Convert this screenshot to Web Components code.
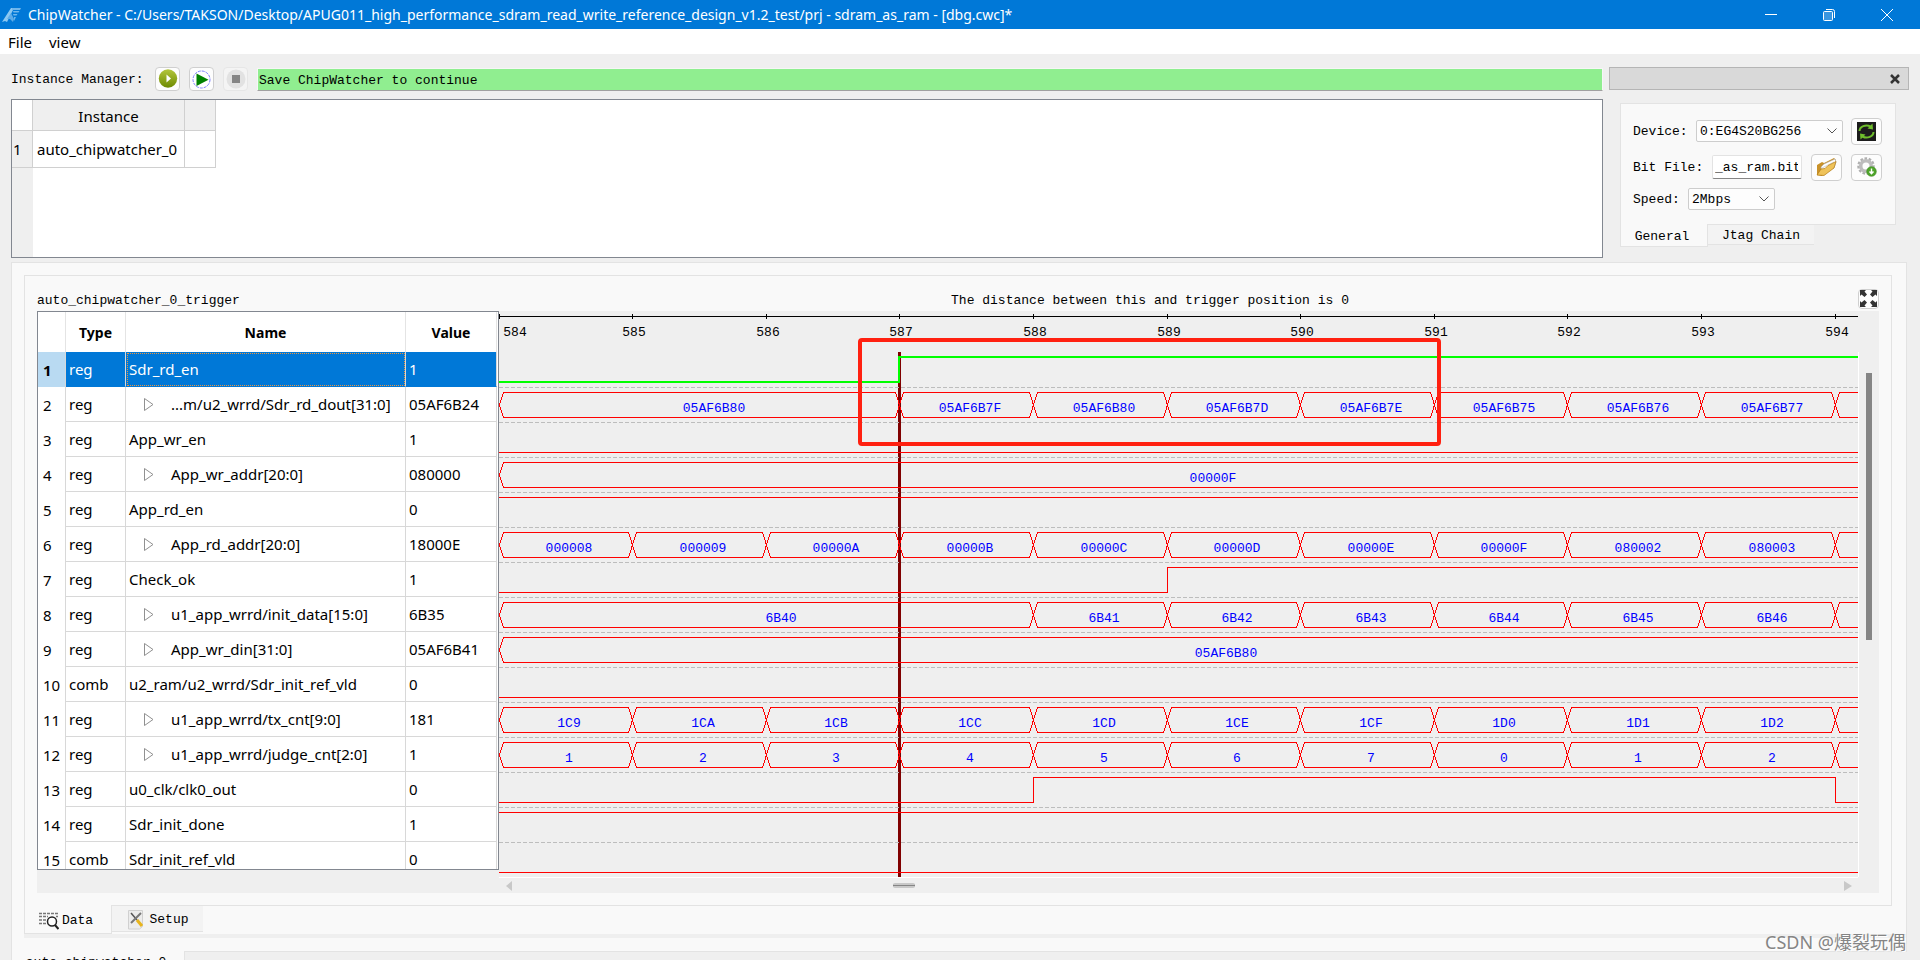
<!DOCTYPE html>
<html lang="en">
<head>
<meta charset="utf-8">
<title>ChipWatcher</title>
<style>
html, body { margin: 0; height: 100%; overflow: hidden; background: #efefef; }
body {
  --ui: "Noto Sans", "Open Sans", "Noto Sans CJK SC", sans-serif;
  --mono: "Liberation Mono", "Noto Sans CJK SC", monospace;
  --panel: #f9f9f9;
  --edge: #e3e3e3;
  --blue: #0078d7;
  color: #000;
  font: 13px/16px var(--mono);
}
</style>
</head>
<body>
<cw-app></cw-app>
<script>
const define = (name, html, setup) => {
  const template = document.createElement('template');
  template.innerHTML = html;
  customElements.define(name, class extends HTMLElement {
    constructor() {
      super();
      this.attachShadow({ mode: 'open' }).append(template.content.cloneNode(true));
    }
    connectedCallback() {
      if (setup && !this.ready) { this.ready = true; setup(this, this.shadowRoot); }
    }
  });
};

/* ---------- data ---------- */
const ORIGIN = 584, STEP = 133.6, ROW = 35, FIRST = 41;
const bus = (...cells) => cells;   // cell: [first sample, text, optional label x]
const each = (...texts) => texts.map((t, i) => [i, t]);
const SIGNALS = [
  { type: 'reg', name: 'Sdr_rd_en', value: '1', bit: [0, 3], selected: true },
  { type: 'reg', name: '...m/u2_wrrd/Sdr_rd_dout[31:0]', value: '05AF6B24',
    bus: bus([0, '05AF6B80', 215], [3, '05AF6B7F'], [4, '05AF6B80'], [5, '05AF6B7D'], [6, '05AF6B7E'], [7, '05AF6B75'], [8, '05AF6B76'], [9, '05AF6B77'], [10, '']) },
  { type: 'reg', name: 'App_wr_en', value: '1', bit: [0] },
  { type: 'reg', name: 'App_wr_addr[20:0]', value: '080000', bus: bus([0, '00000F', 714]) },
  { type: 'reg', name: 'App_rd_en', value: '0', bit: [1] },
  { type: 'reg', name: 'App_rd_addr[20:0]', value: '18000E',
    bus: each('000008', '000009', '00000A', '00000B', '00000C', '00000D', '00000E', '00000F', '080002', '080003', '') },
  { type: 'reg', name: 'Check_ok', value: '1', bit: [0, 5] },
  { type: 'reg', name: 'u1_app_wrrd/init_data[15:0]', value: '6B35',
    bus: bus([0, '6B40', 282], [4, '6B41'], [5, '6B42'], [6, '6B43'], [7, '6B44'], [8, '6B45'], [9, '6B46'], [10, '']) },
  { type: 'reg', name: 'App_wr_din[31:0]', value: '05AF6B41', bus: bus([0, '05AF6B80', 727]) },
  { type: 'comb', name: 'u2_ram/u2_wrrd/Sdr_init_ref_vld', value: '0', bit: [0] },
  { type: 'reg', name: 'u1_app_wrrd/tx_cnt[9:0]', value: '181',
    bus: each('1C9', '1CA', '1CB', '1CC', '1CD', '1CE', '1CF', '1D0', '1D1', '1D2', '') },
  { type: 'reg', name: 'u1_app_wrrd/judge_cnt[2:0]', value: '1',
    bus: each('1', '2', '3', '4', '5', '6', '7', '0', '1', '2', '') },
  { type: 'reg', name: 'u0_clk/clk0_out', value: '0', bit: [0, 4, 10] },
  { type: 'reg', name: 'Sdr_init_done', value: '1', bit: [1] },
  { type: 'comb', name: 'Sdr_init_ref_vld', value: '0', bit: [0] }
];

/* ---------- title bar ---------- */
define('cw-titlebar', `
<style>
:host { display: flex; align-items: center; height: 29px; padding-right: 4px; background: var(--blue); color: #fff; font: 14px/20px var(--ui); }
.logo { margin: 0 7px 0 2px; }
h1 { flex: 1; margin: 0; font: inherit; white-space: nowrap; overflow: hidden; }
button { width: 58px; height: 29px; padding: 0; border: 0; background: none; color: #fff; display: grid; place-items: center; }
svg { display: block; fill: none; stroke: currentColor; }
</style>
<svg class="logo" width="19" height="16" viewBox="0 0 19 16">
  <g stroke="none"><path d="M0 15 9 1h3L7 11l-2 4-2-1z" fill="#8cc8f2"/><path d="M5 12 9 6l3 6-1 3-3-3z" fill="#5cabe8"/>
  <path d="M10 1h9l-1 2h-8zM11 4h6.500l-1 1.500h-5zM11 7h4.500l-1 1.500h-3zM12 10h2l-2 4z" fill="#6fb6ec"/></g>
</svg>
<h1>ChipWatcher - C:/Users/TAKSON/Desktop/APUG011_high_performance_sdram_read_write_reference_design_v1.2_test/prj - sdram_as_ram - [dbg.cwc]*</h1>
<button aria-label="Minimize"><svg width="14" height="14"><path d="M1 6.500h12"/></svg></button>
<button aria-label="Restore"><svg width="14" height="14"><rect x="1.500" y="3.500" width="9" height="9" rx="1" fill="#3a96e0"/><path d="M4 1.500h6.500a2 2 0 0 1 2 2V10"/></svg></button>
<button aria-label="Close"><svg width="14" height="14"><path d="m1 1 12 12M13 1 1 13"/></svg></button>
`);

define('cw-menubar', `
<style>
:host { display: flex; gap: 17px; padding-left: 8px; height: 25px; background: #fff; }
button { padding: 0; border: 0; background: none; color: inherit; font: 15px/26px var(--ui); }
</style>
<button>File</button><button>view</button>
`);

/* ---------- small framed icon button ---------- */
define('cw-tool', `
<style>
:host { display: block; flex: none; width: var(--w, 25px); height: var(--h, 24px); }
button { display: grid; place-items: center; box-sizing: border-box; width: 100%; height: 100%; padding: 0;
  border: 1px solid #cfcfcf; border-radius: 4px; background: #fdfdfd; }
:host([off]) button { border-color: #e6e6e6; background: #f4f4f4; }
::slotted(svg) { display: block; }
</style>
<button><slot></slot></button>
`, (el, root) => {
  const b = root.querySelector('button');
  b.setAttribute('aria-label', el.getAttribute('label'));
  b.disabled = el.hasAttribute('off');
});

/* ---------- instance manager ---------- */
define('cw-instances', `
<style>
:host { display: block; flex: 1; min-width: 0; }
.bar { display: flex; align-items: center; height: 24px; line-height: 20px; }
.bar span { width: 144px; padding-top: 2px; white-space: nowrap; }
cw-tool { margin-right: 9px; }
output { flex: 1; box-sizing: border-box; height: 23px; padding-left: 1px; font: inherit; line-height: 24px;
  background: #90ee90; border: 1px solid #f6f6f6; border-bottom-color: #a0a0a0; }
.box { box-sizing: border-box; height: 159px; margin-top: 8px; border: 1px solid #828790;
  background: linear-gradient(90deg, #efefef 21px, #fff 21px); }
table { border-collapse: separate; border-spacing: 0; table-layout: fixed; width: 204px; background: #fff; font: 15px/20px var(--ui); }
th, td { box-sizing: border-box; padding: 0; border: solid #d0d0d0; border-width: 0 1px 1px 0; font-weight: 400; white-space: nowrap; }
thead tr { height: 31px; } tbody tr { height: 37px; }
thead th { background: #efefef; padding-top: 2px; }
thead td { border-color: #fff #d0d0d0 #d0d0d0 #fff; }
tbody th { background: #efefef; text-align: left; padding-left: 1px; }
tbody td { text-align: left; padding-left: 4px; }
</style>
<div class="bar"><span>Instance Manager:</span>
  <cw-tool label="Run once"><svg width="20" height="20" viewBox="0 0 20 20"><defs><linearGradient id="g" x2="0" y2="1"><stop stop-color="#b3c63c"/><stop offset="1" stop-color="#6d8a00"/></linearGradient></defs><circle cx="10" cy="9.500" r="9.200" fill="url(#g)"/><path d="M8.500 5.500v8l4.500-4z" fill="#fff"/></svg></cw-tool>
  <cw-tool label="Run"><svg width="19" height="19" viewBox="0 0 19 19"><circle cx="9.500" cy="9.500" r="8.500" fill="#fff" stroke="#8080ff" stroke-dasharray="3 1"/><path d="M4.500 3.500v12.500l12-6.200z" fill="#008000"/></svg></cw-tool>
  <cw-tool label="Stop" off><svg width="20" height="20" viewBox="0 0 20 20"><circle cx="10" cy="10" r="9.500" fill="#e2e2e2"/><rect x="6" y="6" width="8" height="8" fill="#858585"/></svg></cw-tool>
  <output>Save ChipWatcher to continue</output>
</div>
<div class="box"><table>
  <colgroup><col style="width:21px"><col style="width:152px"><col style="width:31px"></colgroup>
  <thead><tr><td></td><th scope="col">Instance</th><th></th></tr></thead>
  <tbody><tr><th scope="row">1</th><td>auto_chipwatcher_0</td><td></td></tr></tbody>
</table></div>
`);

/* ---------- drop-down ---------- */
define('cw-select', `
<style>
:host { display: grid; align-items: center; height: 22px; box-sizing: border-box; border: 1px solid #cdcdcd; border-radius: 2px; background: #fdfdfd; }
select, svg { grid-area: 1 / 1; }
select { appearance: none; width: 100%; height: 20px; padding: 2px 0 0 3px; border: 0; background: none; color: inherit; font: inherit; }
svg { justify-self: end; margin-right: 5px; fill: none; stroke: #555; pointer-events: none; }
</style>
<select><option></option></select><svg width="10" height="6"><path d="M.5.5 5 5 9.500.5"/></svg>
`, (el, root) => {
  root.querySelector('option').textContent = el.getAttribute('value');
  root.querySelector('select').setAttribute('aria-label', el.getAttribute('label'));
});

/* ---------- tab strip with the tabs under their page ---------- */
define('cw-tabs', `
<style>
:host { display: flex; align-items: flex-start; margin-top: -1px; }
</style>
<slot></slot>
`, el => el.setAttribute('role', 'tablist'));

define('cw-tab', `
<style>
:host { display: block; box-sizing: border-box; height: calc(var(--tab-h) - 2px); background: #f3f3f3; border: 1px solid var(--edge); border-width: 1px 0 1px 0; }
:host([current]) { height: var(--tab-h); background: var(--panel); border-width: 0 1px 1px 1px; }
button { display: flex; align-items: center; justify-content: center; box-sizing: border-box; width: 100%; height: 100%; padding: 3px 0 0; border: 0; background: none; font: inherit; color: inherit; white-space: nowrap; }
:host([current]) button { padding: 4px 4px 0 0; }
</style>
<button role="tab"><slot></slot></button>
`);

/* ---------- configuration dock ---------- */
define('cw-dock', `
<style>
:host { display: block; flex: none; width: 300px; }
header { box-sizing: border-box; height: 23px; border: 1px solid #b5b5b5; background: #d9d9d9; display: flex; justify-content: flex-end; }
header button { width: 26px; padding: 0; border: 0; background: none; display: grid; place-items: center; }
.page { box-sizing: border-box; width: 276px; height: 122px; margin: 13px 0 0 11px; padding: 13px 13px 0 12px; background: var(--panel); border: 1px solid var(--edge); }
.row { display: flex; align-items: center; height: 28px; margin-bottom: 8px; }
.row:nth-child(2) { margin-bottom: 4px; }
.row label { padding-top: 2px; white-space: nowrap; }
cw-select { flex: none; }
cw-tool { --w: 31px; --h: 27px; margin-left: 9px; }
input { box-sizing: border-box; width: 90px; height: 24px; margin-left: auto; padding: 0 3px 0 2px; border: 1px solid var(--edge); border-bottom-color: #858585; border-radius: 2px; background: #fff; font: inherit; color: inherit; text-align: right; }
cw-tabs { margin-left: 11px; --tab-h: 23px; }
</style>
<header><button aria-label="Close dock"><svg width="10" height="10" stroke="#333" stroke-width="2.500"><path d="m1 1 8 8M9 1 1 9"/></svg></button></header>
<div class="page">
  <div class="row"><label style="width:64px">Device:</label><cw-select label="Device" value="0:EG4S20BG256" style="width:147px"></cw-select>
    <cw-tool label="Refresh" style="margin-left:8px"><svg width="19" height="19" viewBox="0 0 19 19"><rect width="19" height="19" fill="#1c1c1c"/><path d="M2.500 9a7 5.500 0 0 1 11-4.500M16.500 10a7 5.500 0 0 1-11 4.500" fill="none" stroke="#6fbe2c" stroke-width="2"/><path d="m15.500 1.500.5 6-5.500-1zM3.500 17.500l-.5-6 5.500 1z" fill="#6fbe2c"/></svg></cw-tool></div>
  <div class="row"><label for="bit">Bit File:</label><input id="bit" value="_as_ram.bit">
    <cw-tool label="Open"><svg width="22" height="20" viewBox="0 0 22 20"><path d="M1 8 6 5l2 1 10-5 2 2-1 2L6 19l-5-1z" fill="#c9922a"/><path d="M5 10 8 7l11-5 1 3-2 6-12 5z" fill="#fff" stroke="#aaa" stroke-width=".6"/><path d="m6 11 12-6" stroke="#bbb" stroke-width=".6"/><path d="M1 18 5 12l4-.5 3-3 8-4-2 6.500L8 18.500z" fill="#efc35a" stroke="#b27a12" stroke-width=".7"/></svg></cw-tool>
    <cw-tool label="Download"><svg width="20" height="20" viewBox="0 0 20 20"><circle cx="9" cy="9" r="7.500" fill="none" stroke="#b0b0b0" stroke-width="2.500" stroke-dasharray="2.600 1.600"/><circle cx="9" cy="9" r="5.300" fill="none" stroke="#bdbdbd" stroke-width="3.500"/><circle cx="14.500" cy="14.500" r="4.800" fill="#4fa52b" stroke="#3a8a1c" stroke-width=".6"/><path d="M14.500 11.500v5m-2-2 2 2.200 2-2.200" fill="none" stroke="#fff" stroke-width="1.400"/></svg></cw-tool></div>
  <div class="row"><label style="width:55px">Speed:</label><cw-select label="Speed" value="2Mbps" style="width:87px"></cw-select></div>
</div>
<cw-tabs><cw-tab current style="width:88px">General</cw-tab><cw-tab style="width:106px">Jtag Chain</cw-tab></cw-tabs>
`);

/* ---------- signal list ---------- */
define('cw-signals', `
<style>
:host { display: block; box-sizing: border-box; height: 559px; overflow: hidden; border: 1px solid #828790; background: #fff; }
table { border-collapse: separate; border-spacing: 0; table-layout: fixed; width: 459px; font: 15px/20px var(--ui); }
th, td { box-sizing: border-box; height: 35px; padding: 0 0 0 3px; border: solid #d8d8d8; border-width: 0 1px 1px 0; text-align: left; font-weight: 400; white-space: nowrap; overflow: hidden; }
thead th, thead td { height: 40px; border-bottom: 0; text-align: center; padding: 1px 0 0; font-weight: 700; font-size: 14px; border-color: #e4e4e4; }
tbody th { padding: 0 0 0 5px; border-bottom: 0; }
.sel td { background: var(--blue); color: #fff; border-bottom-color: var(--blue); }
.sel th { background: #b9daf2; font-weight: 700; }
.sel .name { outline: 1px dotted #f0963c; outline-offset: -2px; }
td svg { margin: 0 17px 0 15px; vertical-align: -2px; fill: none; stroke: #909090; }
</style>
<table><colgroup><col style="width:28px"><col style="width:60px"><col style="width:280px"><col style="width:91px"></colgroup>
<thead><tr><td></td><th scope="col">Type</th><th scope="col">Name</th><th scope="col">Value</th></tr></thead><tbody></tbody></table>
`, (el, root) => {
  root.querySelector('tbody').innerHTML = SIGNALS.map((s, i) => `<tr${s.selected ? ' class="sel"' : ''}>
    <th scope="row">${i + 1}</th><td>${s.type}</td><td class="name">${s.bus ? '<svg width="10" height="14"><path d="M.5.5v12L9 6.500z"/></svg>' : ''}${s.name}</td><td>${s.value}</td></tr>`).join('');
});

/* ---------- waveform canvas: keeps its time scale, a wider view shows more ---------- */
define('cw-waveform', `
<style>
:host { display: block; min-width: 0; height: 566px; overflow: hidden; }
svg { display: block; width: 100%; height: 100%; fill: none; }
path { shape-rendering: crispEdges; }
text { font: 13px var(--mono); text-anchor: middle; }
.axis { stroke: #000; } .tick { fill: #000; }
.dash { stroke: #bdbdbd; stroke-dasharray: 4 2; }
.wave { stroke: #f00; } .value { fill: #00f; }
.sel { stroke: #0f0; stroke-width: 2; }
</style>
<svg></svg>
`, (el, root) => {
  const END = 4000;
  const at = i => Math.floor(i * STEP);
  let out = `<path class="axis" d="M0 5.500H${END}"/>`;
  for (let i = 0; i < 11; i++) {
    out += `<path class="axis" d="M${at(i) + .5} 3v5"/>
      <text class="tick" x="${i ? at(i) + 2 : 16}" y="25">${ORIGIN + i}</text>`;
  }
  out += `<path d="M400.500 ${FIRST}V566" stroke="#800000" stroke-width="3"/>`;
  SIGNALS.forEach((s, r) => {
    const half = s.selected ? 0 : .5;
    const top = FIRST + r * ROW, hi = top + 5 + half, lo = top + 30 + half, mid = top + 18;
    if (r) out += `<path class="dash" d="M0 ${top + .5}H${END}"/>`;
    if (s.bit) {
      let level = s.bit[0];
      let d = `M0 ${level ? hi : lo}`;
      s.bit.slice(1).forEach(i => { level = !level; d += `H${at(i) + half}V${level ? hi : lo}`; });
      out += `<path class="wave${s.selected ? ' sel' : ''}" d="${d}H${END}"/>`;
    } else {
      s.bus.forEach(([i, text, x], k) => {
        const a = at(i) + .5, next = s.bus[k + 1], b = next ? at(next[0]) + .5 : END;
        out += `<path class="wave" d="M${b - 4} ${hi}H${a + 4}L${a} ${mid}L${a + 4} ${lo}H${b - 4}L${b} ${mid}z"/>
          <text class="value" x="${x || Math.round((a + b) / 2) + 3}" y="${mid + 7}">${text}</text>`;
      });
    }
  });
  out += `<rect x="361" y="29" width="579" height="104" rx="2" stroke="#ff2010" stroke-width="4"/>`;
  root.querySelector('svg').innerHTML = out;
});

/* ---------- trigger view ---------- */
define('cw-viewer', `
<style>
:host { display: block; box-sizing: border-box; margin: 12px 14px 0 12px; padding: 0 12px 12px 12px; border: 1px solid var(--edge); background: var(--panel); }
header { display: grid; grid-template-columns: 462px 1fr 21px; align-items: center; height: 35px; }
header p { margin: 14px 0 0; }
header p + p { text-align: center; padding-right: 57px; }
header cw-tool { --w: 21px; --h: 20px; margin-top: 10px; }
.view { display: grid; grid-template-columns: 462px 1fr 21px; grid-template-rows: 566px 16px; background: #efefef; }
cw-signals { align-self: start; }
.v { margin-top: 41px; border-left: 1px solid #fff; padding: 21px 7px 0 7px; }
.v i { display: block; width: 6px; height: 267px; background: #858585; }
.h { grid-column: 2; box-sizing: border-box; border-top: 1px solid #fff; display: grid; grid-template-columns: 387px 1fr auto; align-items: center; padding: 0 6px 0 7px; }
.h svg { display: block; fill: #c8c8c8; }
.h i { box-sizing: border-box; width: 22px; height: 5px; border: solid #c8c8c8; border-width: 2px 0; background: #858585; border-radius: 2px; }
</style>
<header><p>auto_chipwatcher_0_trigger</p><p>The distance between this and trigger position is 0</p>
<cw-tool label="Full screen"><svg width="17" height="17" viewBox="0 0 17 17" fill="#333"><path d="M0 0h6L4.500 1.500l2.500 3-2.500 2.500-3-2.500L0 6zM17 0v6l-1.500-1.500-3 2.500L10 4.500l2.500-3L11 0zM0 17v-6l1.500 1.500 3-2.500L7 12.500l-2.500 3L6 17zM17 17h-6l1.500-1.500-2.500-3 2.500-2.500 3 2.500L17 11z"/></svg></cw-tool></header>
<div class="view">
  <cw-signals></cw-signals><cw-waveform></cw-waveform><div class="v"><i></i></div>
  <div class="h"><svg width="6" height="10"><path d="M6 0v10L0 5z"/></svg><i></i><svg width="8" height="10"><path d="M0 0v10l8-5z"/></svg></div>
</div>
`);

/* ---------- application window ---------- */
define('cw-app', `
<style>
:host { display: block; min-width: 1200px; }
.top { display: flex; gap: 6px; padding: 13px 11px 0 11px; }
.outer { margin: 4px 13px 0 11px; box-sizing: border-box; border: 1px solid var(--edge); background: var(--panel); display: flow-root; }
.inner-tabs { --tab-h: 29px; margin-left: 12px; }
.inner-tabs cw-tab:first-child { width: 88px; }
.inner-tabs cw-tab:last-child { width: 91px; }
.inner-tabs svg { flex: none; margin-right: 3px; }
.strip { height: 4px; margin: 0 0 13px 12px; background: #efefef; }
.outer-tabs { margin-left: 11px; --tab-h: 20px; }
.mark { position: absolute; right: 14px; bottom: 6px; font: 18px/24px "Noto Sans", "Noto Sans CJK SC", sans-serif; color: #858585; text-shadow: 1px 1px 0 #fff; }
</style>
<cw-titlebar></cw-titlebar>
<cw-menubar></cw-menubar>
<div class="top"><cw-instances></cw-instances><cw-dock></cw-dock></div>
<div class="outer">
  <cw-viewer></cw-viewer>
  <cw-tabs class="inner-tabs">
    <cw-tab current><svg width="20" height="18" viewBox="0 0 20 18" fill="none"><path d="M0 1.500h19M0 4.500h9M0 8h7M0 11.500h8M17 4.500h2" stroke="#777" stroke-width="1.500" stroke-dasharray="3 1"/><circle cx="13" cy="9.500" r="4.500" fill="#fff" stroke="#222" stroke-width="1.500"/><path d="m16 13 3.500 4" stroke="#222" stroke-width="2"/></svg>Data</cw-tab>
    <cw-tab><svg width="20" height="20" viewBox="0 0 20 20" fill="none"><path d="M2.500.5h14v16l-3 2.500h-11z" fill="#ececec" stroke="#d0d0d0"/><path d="M5 3l6 7" stroke="#555" stroke-width="1.500"/><path d="m11 10 5 6" stroke="#e8b41c" stroke-width="3"/><path d="M15 3l-4 4-6 6" stroke="#777" stroke-width="2"/></svg>Setup</cw-tab>
  </cw-tabs>
  <div class="strip"></div>
</div>
<cw-tabs class="outer-tabs"><cw-tab current style="width:174px">auto_chipwatcher_0</cw-tab></cw-tabs>
<div class="mark">CSDN @爆裂玩偶</div>
`);
</script>
</body>
</html>
